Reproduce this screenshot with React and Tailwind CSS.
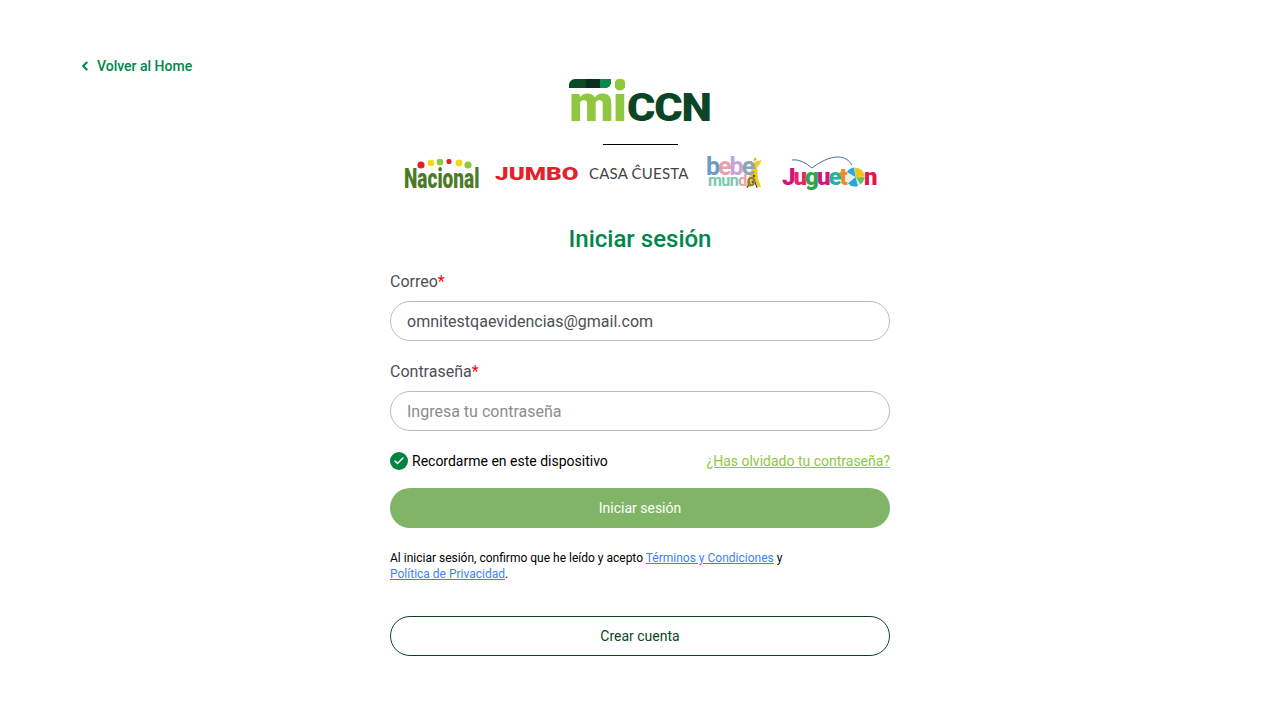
import { ChevronLeft, Check } from 'lucide-react'

const Miccn = () => (
  <div className="relative h-[44px] w-[142px] font-['Roboto',sans-serif] font-black">
    <div className="absolute left-0 top-[-1px] flex items-baseline whitespace-nowrap leading-none">
      <span className="text-[52px] tracking-[-1px] text-[#8fc73e]">mi</span>
      <span className="ml-[1px] origin-left scale-x-[1.11] text-[39px] tracking-[-1px] text-[#0b4525]">CCN</span>
    </div>
    {/* top bars and the dot of the i */}
    <svg className="absolute left-0 top-0" width="42" height="9" viewBox="0 0 42 9">
      <path d="M0 9V6a6 6 0 0 1 6-6h36v3a6 6 0 0 1-6 6z" fill="#0b4a26" />
      <path d="M17 0h15v9H17z" fill="#0a2f1a" />
      <path d="M31 0h11v3a6 6 0 0 1-6 6h-5z" fill="#0a8a4c" />
    </svg>
    <div className="absolute left-[46px] top-0 h-[9px] w-[10px] rounded-t-[4px] bg-[#8fc73e]" />
  </div>
)

const Nacional = () => (
  <div className="relative h-[32px] w-[76px]">
    <span className="absolute left-0 top-[4px] origin-left scale-x-[0.68] whitespace-nowrap font-['Roboto',sans-serif] text-[28px] font-black leading-[32px] text-[#4c7a26]">
      Nacional
    </span>
    <svg className="absolute left-0 top-0" width="76" height="10" viewBox="0 0 76 10">
      <circle cx="17" cy="6" r="3.6" fill="#e3202b" />
      <circle cx="27" cy="4" r="3.3" fill="#f5d90a" />
      <circle cx="36" cy="3" r="3.4" fill="#8fc73e" />
      <circle cx="45" cy="2.5" r="2.6" fill="#e3202b" />
      <circle cx="55" cy="4" r="3.4" fill="#f5d90a" />
      <circle cx="64" cy="6" r="3.6" fill="#8fc73e" />
    </svg>
  </div>
)

const Bebe = () => (
  <div className="relative h-[36px] w-[60px] font-['Roboto',sans-serif]">
    {/* giraffe */}
    <svg className="absolute left-[34px] top-[1px]" width="26" height="34" viewBox="0 0 26 34">
      <path d="M14 6l8-2-3 5-2 2 1 12 3 8h-5l-2-6-3 6H6l3-10 3-9z" fill="#f2c927" />
      <path d="M13 5l2-4 2 3z M7 7l5-2 1 3z" fill="#e9b310" />
      <circle cx="14" cy="20" r="1.3" fill="#6b4a1a" />
      <circle cx="13" cy="26" r="1.3" fill="#6b4a1a" />
      <path d="M7 32l3-6M17 32l-2-6" stroke="#3c3c3c" strokeWidth="1" fill="none" />
    </svg>
    <div className="absolute left-0 top-0 whitespace-nowrap text-[25px] font-bold leading-[24px] tracking-[-2px]">
      <span className="text-[#6e9ac9]">b</span>
      <span className="text-[#e7a0aa]">e</span>
      <span className="text-[#c6a3d6]">b</span>
      <span className="text-[#8aa4b8]">e</span>
    </div>
    <div className="absolute left-[2px] top-[18px] whitespace-nowrap text-[16px] font-bold leading-[16px] tracking-[-0.5px]">
      <span className="text-[#79c9ae]">mun</span>
      <span className="text-[#e7a0aa]">d</span>
      <span className="text-[#8a7a4a]">o</span>
    </div>
  </div>
)

const Jugueton = () => (
  <div className="relative h-[36px] w-[96px]">
    <svg className="absolute left-0 top-0" width="96" height="36" viewBox="0 0 96 36">
      <path d="M10 4c7-1 14 3 20 8 8-6 17-11 26-11 6 0 11 3 14 8" stroke="#3d6fa8" strokeWidth="1" fill="none" />
      <circle cx="73" cy="21" r="9.5" fill="#e9efee" />
      <path d="M73 11.500a9.500 9.500 0 0 1 9.500 9l-9 1z" fill="#f0c419" />
      <path d="M65 16a9.500 9.500 0 0 1 7-4.500l1.500 9.500z" fill="#27a8d8" />
      <path d="M66 27.500l7.500-6.500 2.500 9a9.500 9.500 0 0 1-10-2.500z" fill="#27a8d8" />
      <path d="M82.500 21a9.500 9.500 0 0 1-4 7.500l-4.500-7z" fill="#6cbf5a" />
    </svg>
    <div className="absolute left-0 top-[7px] flex whitespace-nowrap font-['Roboto',sans-serif] text-[24px] font-black leading-[28px] tracking-[-2px]">
      <span className="text-[#d6127e]">J</span>
      <span className="text-[#e8246a]">u</span>
      <span className="text-[#2ba84a]">g</span>
      <span className="text-[#d6127e]">u</span>
      <span className="text-[#2bb0a0]">e</span>
      <span className="text-[#f08a1d]">t</span>
      <span className="absolute left-[82px] text-[#e3164f]">n</span>
    </div>
  </div>
)

const Brands = () => (
  <div className="mt-[10px] flex h-[38px] items-center">
    <div className="ml-[14px] mt-[1px] w-[76px]">
      <Nacional />
    </div>
    <div className="ml-[15px] w-[83px]">
      <span className="block origin-left scale-x-[1.35] whitespace-nowrap font-['Roboto',sans-serif] text-[18px] font-black leading-none text-[#e3202b]">
        JUMBO
      </span>
    </div>
    <span className="ml-[11px] mt-[-2px] w-[100px] whitespace-nowrap font-['Lato',sans-serif] text-[15px] leading-none tracking-[0.2px] text-[#444444]">
      CASA ĈUESTA
    </span>
    <div className="ml-[17px] mt-[-2px] w-[60px]">
      <Bebe />
    </div>
    <div className="ml-[16px] w-[96px]">
      <Jugueton />
    </div>
  </div>
)

const Field = ({ label, placeholder, value }) => (
  <div>
    <label className="block text-base leading-[24px] text-[#4d5055]">
      {label}
      <span className="text-[#ff0000]">*</span>
    </label>
    <input
      readOnly
      value={value}
      placeholder={placeholder}
      className="mt-[7px] block h-[40px] w-full rounded-full border border-[#bdbdbd] bg-white px-4 text-base text-[#4d5055] outline-none placeholder:text-[#8c8c8c]"
    />
  </div>
)

export default function App() {
  return (
    <div className="grid min-h-[720px] grid-cols-[1fr_500px_1fr] bg-white font-['Roboto',sans-serif]">
      {/* Back link */}
      <div className="pl-[78px] pt-[56px]">
        <a className="flex items-center gap-[5px] text-sm font-medium leading-[20px] text-[#00854d]">
          <ChevronLeft size={14} strokeWidth={3.5} />
          Volver al Home
        </a>
      </div>

      <main className="pt-[79px]">
        <div className="flex flex-col items-center">
          <Miccn />
          <div className="mt-[21px] h-px w-[75px] bg-black" />
        </div>
        <Brands />

        <h1 className="mt-[30px] text-center text-2xl font-medium leading-[32px] text-[#00854d]">Iniciar sesión</h1>

        <div className="mt-[15px] flex flex-col gap-[19px]">
          <Field label="Correo" value="omnitestqaevidencias@gmail.com" />
          <Field label="Contraseña" placeholder="Ingresa tu contraseña" value="" />
        </div>

        <div className="mt-[20px] flex items-center justify-between">
          <div className="flex items-center gap-[4px]">
            <span className="flex h-[18px] w-[18px] items-center justify-center rounded-full bg-[#00843d] text-white">
              <Check size={12} strokeWidth={3} />
            </span>
            <span className="text-sm leading-[20px] text-black">Recordarme en este dispositivo</span>
          </div>
          <a className="text-sm leading-[20px] text-[#8fc73e] underline">¿Has olvidado tu contraseña?</a>
        </div>

        <button className="mt-[17px] block h-[40px] w-full rounded-full bg-[#80b567] text-sm text-white">
          Iniciar sesión
        </button>

        <p className="mt-[22px] text-xs leading-[16px] text-black">
          Al iniciar sesión, confirmo que he leído y acepto{' '}
          <a className="text-[#3b82f6] underline">Términos y Condiciones</a> y
          <br />
          <a className="text-[#3b82f6] underline">Política de Privacidad</a>.
        </p>

        <button className="mt-[34px] block h-[40px] w-full rounded-full border border-[#0b4525] bg-white text-sm text-[#0b4525]">
          Crear cuenta
        </button>
      </main>
      <div />
    </div>
  )
}
